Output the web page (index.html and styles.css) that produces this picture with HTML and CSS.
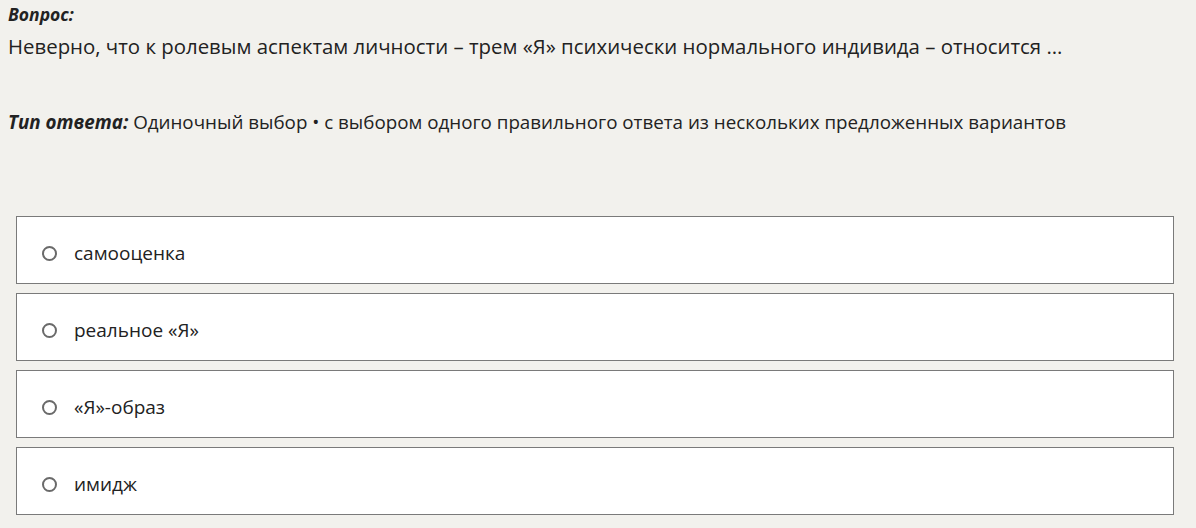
FILE: index.html
```html
<!DOCTYPE html>
<html lang="ru">
<head>
    <meta charset="UTF-8">
    <title>Вопрос</title>
    <link rel="stylesheet" href="styles.css">
</head>
<body>

    <div class="question">
        <div class="label">Вопрос:</div>
        <div class="question-text">Неверно, что к ролевым аспектам личности – трем «Я» психически нормального индивида – относится ...</div>
    </div>

    <div class="answer-type">
        <span class="label">Тип ответа:</span> Одиночный выбор • с выбором одного правильного ответа из нескольких предложенных вариантов
    </div>

    <div class="options">
        <label class="option">
            <span class="radio"></span>
            <span class="option-text">самооценка</span>
        </label>
        <label class="option">
            <span class="radio"></span>
            <span class="option-text">реальное «Я»</span>
        </label>
        <label class="option">
            <span class="radio"></span>
            <span class="option-text">«Я»-образ</span>
        </label>
        <label class="option">
            <span class="radio"></span>
            <span class="option-text">имидж</span>
        </label>
    </div>

</body>
</html>
```

FILE: styles.css
```css
body {
    font-family: "Open Sans", "Noto Sans", sans-serif;
    background-color: #f2f1ed;
    color: #222;
    margin: 0;
    padding: 0 8px;
}
.label {
    font-weight: bold;
    font-style: italic;
}
.question {
    padding-top: 2px;
}
.question .label {
    font-size: 17.5px;
    line-height: 24px;
}
.question-text {
    font-size: 20.4px;
    line-height: 28px;
    margin-top: 6px;
}
.answer-type {
    font-size: 18.8px;
    line-height: 26px;
    margin-top: 49px;
}
.options {
    display: flex;
    flex-direction: column;
    gap: 9px;
    margin: 81px 14px 0 8px;
}
.option {
    display: flex;
    align-items: center;
    gap: 17px;
    height: 68px;
    box-sizing: border-box;
    padding-left: 25px;
    padding-top: 6px;
    background-color: #ffffff;
    border: 1px solid #7a7a7a;
    font-size: 19px;
    cursor: pointer;
}
.radio {
    width: 15px;
    height: 15px;
    border: 2px solid #6a6a6a;
    border-radius: 50%;
    box-sizing: border-box;
}
```
